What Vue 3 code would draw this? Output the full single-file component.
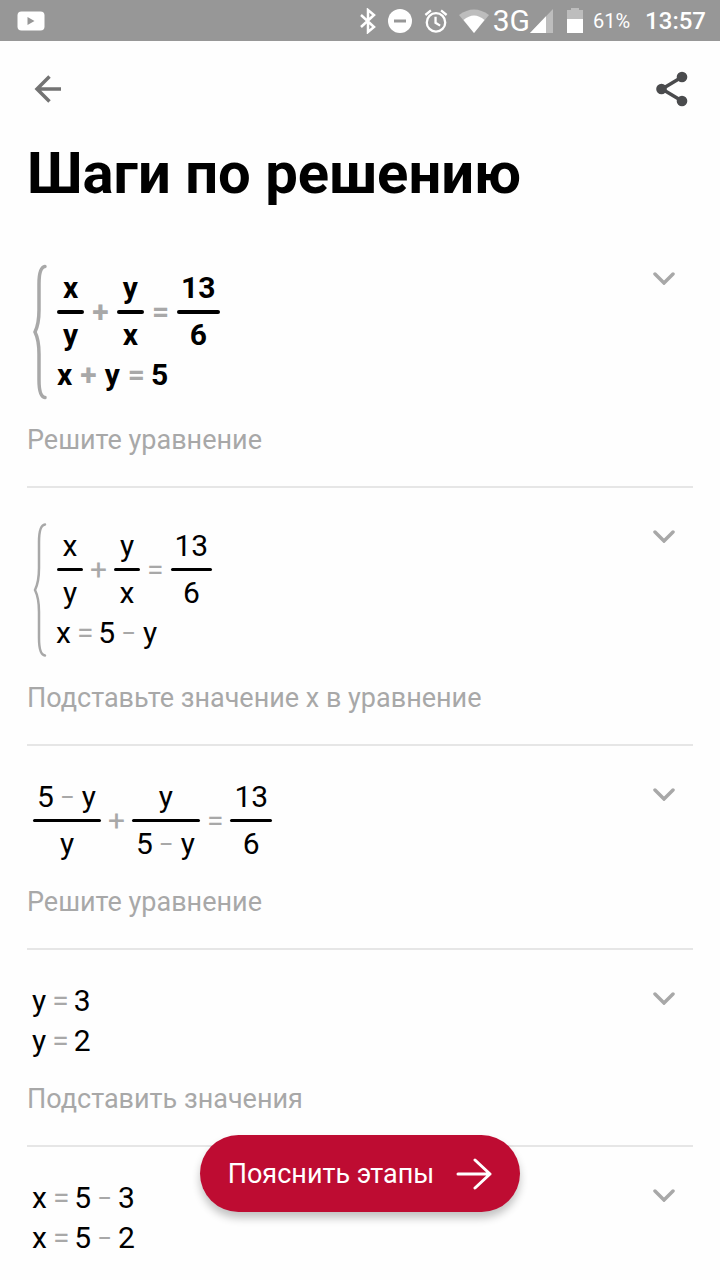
<script setup>
import { computed } from 'vue';

const OPERATORS = ['+', '−', '='];

// A row is a list of terms: a plain string or a fraction [numerator, denominator]
const steps = [
  {
    system: true,
    bold: true,
    rows: [[['x', 'y'], '+', ['y', 'x'], '=', ['13', '6']], ['x + y = 5']],
    hint: 'Решите уравнение'
  },
  {
    system: true,
    rows: [[['x', 'y'], '+', ['y', 'x'], '=', ['13', '6']], ['x = 5 − y']],
    hint: 'Подставьте значение x в уравнение'
  },
  {
    rows: [[['5 − y', 'y'], '+', ['y', '5 − y'], '=', ['13', '6']]],
    hint: 'Решите уравнение'
  },
  {
    rows: [['y = 3'], ['y = 2']],
    hint: 'Подставить значения'
  },
  {
    rows: [['x = 5 − 3'], ['x = 5 − 2']]
  }
];

function atomClass(value) {
  if (value === '−') return ['operator', 'minus'];
  if (OPERATORS.includes(value)) return ['operator'];
  return /\d/.test(value) ? ['number'] : ['letter'];
}

// Split "5 − y" into atoms with a class for each
function atoms(text) {
  return text.split(' ').map((value) => ({ value, kind: atomClass(value) }));
}

const parsedSteps = computed(() =>
  steps.map((step) => ({
    ...step,
    rows: step.rows.map((row) =>
      row.map((term) =>
        Array.isArray(term)
          ? { parts: term.map(atoms) }
          : { atoms: atoms(term) }
      )
    )
  }))
);
</script>

<template>
  <div class="screen">
    <div class="status-bar">
      <svg width="28" height="20" viewBox="0 0 28 20">
        <rect x="0.5" y="0.5" width="27" height="19" rx="4" fill="#fff" />
        <path d="M10.5 6v8l7-4z" fill="#979797" />
      </svg>
      <div class="status-icons">
        <svg width="16" height="26" viewBox="0 0 16 26" fill="none" stroke="#fff" stroke-width="2.5">
          <path d="M1 7l13 12-6 5V2l6 5L1 19" />
        </svg>
        <svg class="dnd" width="24" height="24" viewBox="0 0 24 24">
          <circle cx="12" cy="12" r="12" fill="#fff" />
          <path d="M6 12h12" stroke="#979797" stroke-width="3" />
        </svg>
        <svg class="alarm" width="24" height="26" viewBox="0 0 26 26" fill="none" stroke="#fff" stroke-width="2.5">
          <circle cx="13" cy="14.5" r="10" />
          <path d="M12.5 8.5v6.5l5 3M1.5 6.5l6-5M18.5 1.5l6 5" />
        </svg>
        <svg class="wifi" width="30" height="24" viewBox="0 0 30 24">
          <path d="M0 6Q15 -5 30 6L15 24z" fill="#bdbdbd" />
          <path d="M4.5 11Q15 2 25.5 11L15 24z" fill="#fff" />
        </svg>
        <span class="network">3G</span>
        <svg width="23" height="24" viewBox="0 0 23 24">
          <path d="M23 0v24H0z" fill="#bdbdbd" />
          <path d="M16 7.3V24H0z" fill="#fff" />
        </svg>
        <svg class="battery" width="16" height="25" viewBox="0 0 16 25">
          <path d="M0 11V2h4V0h8v2h4v9z" fill="#bdbdbd" />
          <path d="M0 11h16v14H0z" fill="#fff" />
        </svg>
        <span class="percent">61%</span>
        <span class="clock">13:57</span>
      </div>
    </div>

    <header class="toolbar">
      <button class="icon-button" type="button" aria-label="Назад">
        <svg width="28" height="28" viewBox="0 0 28 28" fill="none" stroke="#737373" stroke-width="3.5">
          <path d="M27 14H3M15.5 1.5L3 14l12.5 12.5" />
        </svg>
      </button>
      <button class="icon-button" type="button" aria-label="Поделиться">
        <svg width="32" height="36" viewBox="0 0 32 36" fill="#4a4b4d">
          <path d="M26 6L6 18l20 12" fill="none" stroke="#4a4b4d" stroke-width="3.5" />
          <circle cx="26" cy="6" r="5.3" />
          <circle cx="5.5" cy="18" r="5.3" />
          <circle cx="26" cy="30" r="5.3" />
        </svg>
      </button>
    </header>

    <main class="content">
      <h1 class="title">Шаги по решению</h1>

      <section
        v-for="(step, i) in parsedSteps"
        :key="i"
        class="step"
        :class="{ 'is-bold': step.bold, 'is-system': step.system }"
      >
        <div class="step-main">
          <div class="equation">
            <svg v-if="step.system" class="brace" width="14" height="136" viewBox="0 0 14 136">
              <path d="M12 2.5C8 3 6 8 6 20V46C6 57 5 62 2 68C5 74 6 79 6 90V116C6 128 8 133 12 133.5" />
            </svg>
            <div class="rows">
              <div v-for="(row, r) in step.rows" :key="r" class="row">
                <template v-for="(term, t) in row" :key="t">
                  <span v-if="term.parts" class="fraction">
                    <span v-for="(part, p) in term.parts" :key="p" class="part">
                      <span v-for="(atom, a) in part" :key="a" :class="atom.kind">{{ atom.value }}</span>
                    </span>
                  </span>
                  <template v-else>
                    <span v-for="(atom, a) in term.atoms" :key="a" :class="atom.kind">{{ atom.value }}</span>
                  </template>
                </template>
              </div>
            </div>
          </div>
          <p v-if="step.hint" class="hint">{{ step.hint }}</p>
        </div>
        <button class="expand" type="button" aria-label="Развернуть">
          <svg width="22" height="14" viewBox="0 0 22 14" fill="none" stroke="#a8a8a8" stroke-width="3.5" stroke-linecap="round">
            <path d="M2 3l9 9 9-9" />
          </svg>
        </button>
      </section>
    </main>

    <div class="action">
      <button class="explain" type="button">
        <span>Пояснить этапы</span>
        <svg width="36" height="32" viewBox="0 0 36 32" fill="none" stroke="#fff" stroke-width="3" stroke-linecap="round" stroke-linejoin="round">
          <path d="M2 16h32M19 2l15 14-15 14" />
        </svg>
      </button>
    </div>
  </div>
</template>

<style>
body {
  margin: 0;
  background: #fff;
}
</style>

<style scoped>
.screen {
  position: relative;
  height: 100vh;
  display: flex;
  flex-direction: column;
  overflow: hidden;
  background: #fefefe;
  font-family: Roboto, "Noto Sans", sans-serif;
  color: #000;
}

button {
  border: 0;
  padding: 0;
  background: none;
  font: inherit;
  cursor: pointer;
}

svg {
  display: block;
  flex: none;
}

/* Status bar */
.status-bar {
  flex: none;
  height: 41px;
  padding: 0 14px 0 17px;
  display: flex;
  align-items: center;
  justify-content: space-between;
  background: #979797;
  color: #fff;
}
.status-icons {
  display: flex;
  align-items: center;
}
.dnd { margin-left: 12px; }
.alarm { margin-left: 12px; }
.wifi { margin-left: 11px; }
.network {
  margin-left: 4px;
  font-size: 30px;
}
.battery { margin-left: 14px; }
.percent {
  margin-left: 10px;
  font-size: 20px;
}
.clock {
  margin-left: 15px;
  font-size: 24px;
  font-weight: 500;
}

/* Toolbar */
.toolbar {
  flex: none;
  height: 96px;
  padding: 0 24px;
  display: flex;
  align-items: center;
  justify-content: space-between;
}
.icon-button {
  width: 48px;
  height: 48px;
  display: flex;
  align-items: center;
  justify-content: center;
}

/* Steps */
.content {
  flex: 1;
  min-height: 0;
  padding: 0 27px;
  overflow-y: auto;
  scrollbar-width: none;
}
.title {
  margin: 0;
  padding-bottom: 21px;
  font-size: 58px;
  line-height: 72px;
  font-weight: 700;
}
.step {
  display: flex;
  align-items: flex-start;
  justify-content: space-between;
  padding: 31px 0 26px;
  border-bottom: 2px solid #e6e6e6;
}
.step:last-child {
  border-bottom: 0;
}
.expand {
  width: 58px;
  height: 34px;
  display: flex;
  align-items: center;
  justify-content: center;
}
.hint {
  margin: 18px 0 0;
  font-size: 27px;
  line-height: 40px;
  color: #a8a8a8;
}

/* Math */
.equation {
  display: flex;
  align-items: center;
  padding-left: 4px;
  font-size: 30px;
  line-height: 40px;
}
.is-bold .equation {
  font-weight: 700;
}
.is-system .equation {
  padding-left: 6px;
}
.is-system .rows {
  padding: 7px 0 7px 8px;
}
.brace {
  fill: none;
  stroke: #a8a8a8;
  stroke-width: 2.5;
  stroke-linecap: round;
}
.is-bold .brace {
  stroke-width: 3.5;
}
.row {
  display: flex;
  align-items: center;
}
.letter {
  margin: 0 1px;
}
.operator {
  margin: 0 5px;
  color: #a8a8a8;
}
.minus {
  margin: 0 6px;
  font-size: 26px;
}
.is-bold .letter {
  margin: 0 2px;
}
.is-bold .operator {
  margin: 0 6px;
}
.fraction {
  min-width: 26px;
  margin: 0 2px;
}
.part {
  display: flex;
  justify-content: center;
  padding: 0 4px;
}
.part:first-child {
  padding-bottom: 2px;
}
.part + .part {
  position: relative;
  padding-top: 5px;
}
.part + .part::before {
  content: "";
  position: absolute;
  top: 0;
  left: 0;
  right: 0;
  height: 3px;
  border-radius: 2px;
  background: #000;
}
.is-bold .part + .part::before {
  height: 4px;
}

/* Floating button */
.action {
  position: absolute;
  left: 0;
  right: 0;
  bottom: 68px;
  display: flex;
  justify-content: center;
}
.explain {
  height: 77px;
  padding: 0 28px;
  display: flex;
  align-items: center;
  gap: 22px;
  border-radius: 39px;
  background: #be0c32;
  color: #fff;
  font-size: 27px;
  box-shadow: 0 6px 8px rgba(0, 0, 0, 0.24);
}
</style>
